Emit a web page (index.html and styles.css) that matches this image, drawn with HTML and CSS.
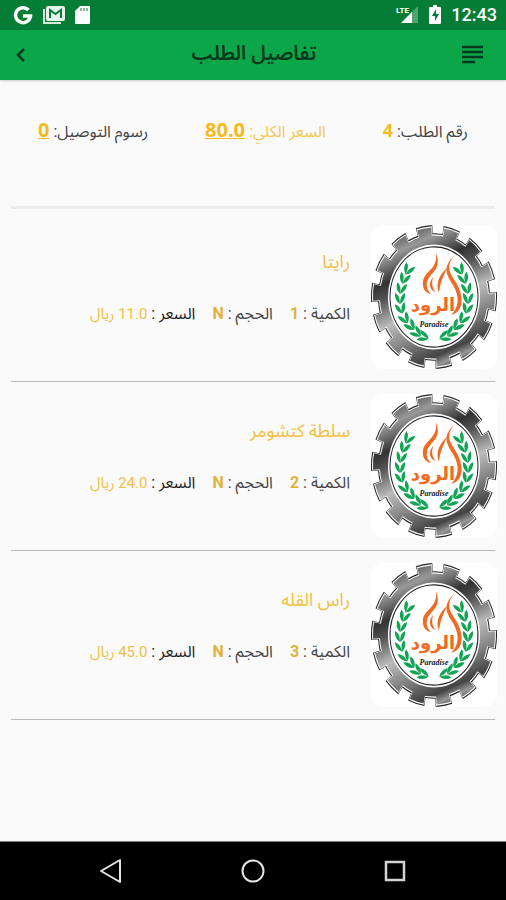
FILE: index.html
```html
<!DOCTYPE html>
<html lang="ar" dir="rtl">
<head>
  <meta charset="UTF-8" />
  <meta name="viewport" content="width=device-width, initial-scale=1.0" />
  <title>تفاصيل الطلب</title>
  <link rel="stylesheet" href="styles.css">
</head>
<body>
  <!-- Shared logo -->
  <svg class="defs" width="0" height="0" aria-hidden="true">
    <defs>
      <linearGradient id="steel" gradientUnits="userSpaceOnUse" x1="-20" y1="-63" x2="20" y2="63">
        <stop offset="0" stop-color="#555" />
        <stop offset=".12" stop-color="#999" />
        <stop offset=".28" stop-color="#333" />
        <stop offset=".38" stop-color="#555" />
        <stop offset=".55" stop-color="#bbb" />
        <stop offset=".7" stop-color="#888" />
        <stop offset=".87" stop-color="#444" />
        <stop offset=".93" stop-color="#999" />
        <stop offset="1" stop-color="#222" />
      </linearGradient>
      <marker id="leaf" markerUnits="userSpaceOnUse" markerWidth="16" markerHeight="16" refX="8" refY="8" orient="auto">
        <path d="M13 8Q9 2 2 3Q4 8 13 8ZM13 8Q9 14 2 13Q4 8 13 8Z" fill="#12a455" />
      </marker>
      <symbol id="logo" viewBox="0 0 126 144">
        <rect width="126" height="144" rx="12" fill="#fff" />
        <g transform="translate(63 72) scale(1 1.14) rotate(-4)" fill="none">
          <circle r="57" stroke="#222" stroke-width="12" pathLength="280" stroke-dasharray="12 8" />
          <circle r="56" fill="#222" />
          <circle r="56" stroke="#fff" stroke-width="12" pathLength="280" stroke-dasharray="11.400 8.600" stroke-dashoffset="-.3" />
          <circle r="55" fill="#fff" />
          <circle r="55" stroke="url(#steel)" stroke-width="12" pathLength="280" stroke-dasharray="10.600 9.400" stroke-dashoffset="-.7" />
          <circle r="54" fill="url(#steel)" />
          <circle r="46" fill="#fff" />
          <circle r="44" fill="#fff" stroke="#222" stroke-width="1" />
        </g>
        <path d="M42 37L37 45L33 54L30 64L29 74L30 84L34 94L40 101L46 108L53 112L61 114" fill="none" marker-mid="url(#leaf)" />
        <path d="M84 37L89 45L93 54L96 64L97 74L96 84L92 94L86 101L80 108L73 112L65 114" fill="none" marker-mid="url(#leaf)" />
        <!-- flame -->
        <g fill="#f26a21">
          <path d="M65 28C72 46 57 48 56 58C55 63 57 66 60 69C54 68 51 63 52 56C54 46 67 44 65 28Z" />
          <path d="M84 30C74 41 79 48 84 56C92 68 95 86 80 90C88 82 89 72 82 60C75 49 71 42 84 30Z" />
          <path d="M76 43C72 52 69 58 68 68C64 58 69 49 76 43Z" />
          <path d="M62 52C61 57 60 62 65 67C58 65 57 58 62 52Z" />
        </g>
        <text x="62" y="86" class="logo-word">الرود</text>
        <text x="63" y="102" class="logo-sub">Paradise</text>
      </symbol>
    </defs>
  </svg>

  <div class="status-bar" dir="ltr">
    <div class="status-group">
      <svg width="20" height="20" viewBox="0 0 20 20"><path d="M15.500 5A7.500 7.500 0 1 0 17.500 11H10" fill="none" stroke="#fff" stroke-width="3.500" /></svg>
      <svg width="24" height="20" viewBox="0 0 24 20"><path d="M2 4V18H19" fill="none" stroke="#d4ebdd" stroke-width="2" /><rect x="4" y="1" width="19" height="15" rx="2" fill="#e6f3eb" /><path d="M8 13V5L13.500 9L19 5V13" fill="none" stroke="#067d37" stroke-width="2" /></svg>
      <svg width="16" height="20" viewBox="0 0 16 20"><path d="M5 1H14Q15 1 15 2V18Q15 19 14 19H1Q0 19 0 18V6Z" fill="#fff" /><path d="M6 3V6M9 3V6M12 3V6" stroke="#067d37" /></svg>
    </div>
    <div class="status-group status-right">
      <svg width="23" height="20" viewBox="0 0 23 20"><path d="M22 1V18H5Z" fill="#4ea371" /><path d="M16 7V18H5Z" fill="#fff" /><text x="0" y="8" class="lte">LTE</text></svg>
      <svg width="12" height="20" viewBox="0 0 12 20"><path d="M4 0H8V2H11Q12 2 12 3V18Q12 19 11 19H1Q0 19 0 18V3Q0 2 1 2H4Z" fill="#fff" /><path d="M7 4L3 11H6V16L10 9H7Z" fill="#067d37" /></svg>
      <span class="clock">12:43</span>
    </div>
  </div>

  <header class="app-bar">
    <button class="icon-button" aria-label="القائمة">
      <svg width="22" height="20" viewBox="0 0 22 20"><path d="M0 2H21M0 7H21M0 12H21M0 17H13" stroke="#06391b" stroke-width="2.500" /></svg>
    </button>
    <h1>تفاصيل الطلب</h1>
    <button class="icon-button" aria-label="رجوع">
      <svg width="22" height="20" viewBox="0 0 22 20"><path d="M14 4L8 10L14 16" fill="none" stroke="#06391b" stroke-width="2.500" /></svg>
    </button>
  </header>

  <main>
    <section class="summary">
      <div>رقم الطلب: <b class="number">4</b></div>
      <div class="total">السعر الكلي: <b class="amount">80.0</b></div>
      <div>رسوم التوصيل: <b class="amount">0</b></div>
    </section>

    <ul class="items">
      <li class="item">
        <svg class="item-logo" viewBox="0 0 126 144"><use href="#logo" /></svg>
        <div class="item-info">
          <h2>رايتا</h2>
          <div class="details">
            <span>الكمية : <b>1</b></span>
            <span>الحجم : <b>N</b></span>
            <span class="price">السعر : <em>11.0 ريال</em></span>
          </div>
        </div>
      </li>
      <li class="item">
        <svg class="item-logo" viewBox="0 0 126 144"><use href="#logo" /></svg>
        <div class="item-info">
          <h2>سلطة كتشومر</h2>
          <div class="details">
            <span>الكمية : <b>2</b></span>
            <span>الحجم : <b>N</b></span>
            <span class="price">السعر : <em>24.0 ريال</em></span>
          </div>
        </div>
      </li>
      <li class="item">
        <svg class="item-logo" viewBox="0 0 126 144"><use href="#logo" /></svg>
        <div class="item-info">
          <h2>راس القله</h2>
          <div class="details">
            <span>الكمية : <b>3</b></span>
            <span>الحجم : <b>N</b></span>
            <span class="price">السعر : <em>45.0 ريال</em></span>
          </div>
        </div>
      </li>
    </ul>
  </main>

  <nav class="nav-bar" dir="ltr">
    <button aria-label="رجوع"><svg width="24" height="26" viewBox="0 0 24 26"><path d="M21 2V24L2 13Z" fill="none" stroke="#e4e4e4" stroke-width="2" stroke-linejoin="round" /></svg></button>
    <button aria-label="الرئيسية"><svg width="24" height="26" viewBox="0 0 24 26"><circle cx="12" cy="13" r="10.500" fill="none" stroke="#e4e4e4" stroke-width="2" /></svg></button>
    <button aria-label="التطبيقات"><svg width="24" height="26" viewBox="0 0 24 26"><rect x="3" y="4" width="18" height="18" fill="none" stroke="#d4d4d4" stroke-width="2.500" /></svg></button>
  </nav>
</body>
</html>
```
FILE: styles.css
```css
*, *::before, *::after { box-sizing: border-box; }

body { display: flex; flex-direction: column; min-height: 100vh; margin: 0; font-family: Roboto, "Noto Sans Arabic", "DejaVu Sans", sans-serif; font-size: 16px; background: #fafafa; color: #444; }
button { padding: 0; border: none; background: none; cursor: pointer; }
svg { display: block; }
.defs { position: absolute; }

/* Status bar */
.status-bar { display: flex; justify-content: space-between; align-items: center; height: 30px; padding: 0 9px 0 13px; background: #067d37; }
.status-group { display: flex; align-items: center; gap: 9px; }
.status-right { gap: 10px; }
.clock { color: #fff; font-size: 18px; font-weight: 500; line-height: 30px; }
.lte { font: bold 8px Roboto, sans-serif; fill: #fff; }

/* App bar */
.app-bar { display: flex; justify-content: space-between; align-items: center; height: 50px; padding: 0 10px; background: #0ba64a; box-shadow: 0 1px 2px rgba(0,0,0,0.2); }
.app-bar h1 { margin: 0; padding-bottom: 4px; font-size: 20px; font-weight: 600; line-height: 30px; color: #06391b; }
.icon-button { display: flex; justify-content: flex-end; width: 36px; }
.icon-button:first-child { width: 34px; }

/* Order summary */
.summary { display: flex; justify-content: space-between; height: 129px; margin: 0 11px 4px; padding: 37px 27px 0; border-bottom: 3px solid #ebebeb; line-height: 30px; white-space: nowrap; }
.summary b { font-family: "Noto Sans", sans-serif; font-size: 18px; line-height: 20px; color: #f5bb1d; }
.summary .amount { font-size: 20px; text-decoration: underline; text-decoration-thickness: 1px; }
.summary .total { color: #f6c64f; }

/* Items */
main { flex: 1; }
.items { margin: 0 11px; padding: 0; list-style: none; }
.item { display: flex; gap: 21px; padding: 12px 0; border-bottom: 1px solid #bbb; }
.item-logo { flex: none; width: 126px; height: 144px; margin-inline-start: -2px; }
.item-info { flex: 1; padding-top: 22px; }
.item-info h2 { margin: 0 0 22px; font-size: 18px; font-weight: 400; line-height: 30px; color: #f3c03d; }
.details { display: flex; gap: 17px; line-height: 30px; white-space: nowrap; }
.details b { font-weight: 700; color: #e3b13a; }
.details em { font-size: 15px; font-style: normal; font-weight: 400; color: #f2bf45; }
.details .price { color: #222; }

/* Logo lettering */
.logo-word { font: bold 18px "DejaVu Sans", sans-serif; fill: #f26a21; text-anchor: middle; }
.logo-sub { font: italic bold 8px "Liberation Serif", serif; fill: #222; text-anchor: middle; direction: ltr; }

/* Navigation bar */
.nav-bar { display: flex; justify-content: center; align-items: center; gap: 118px; height: 59px; background: #000; border-top: 1px solid #777; }
```
